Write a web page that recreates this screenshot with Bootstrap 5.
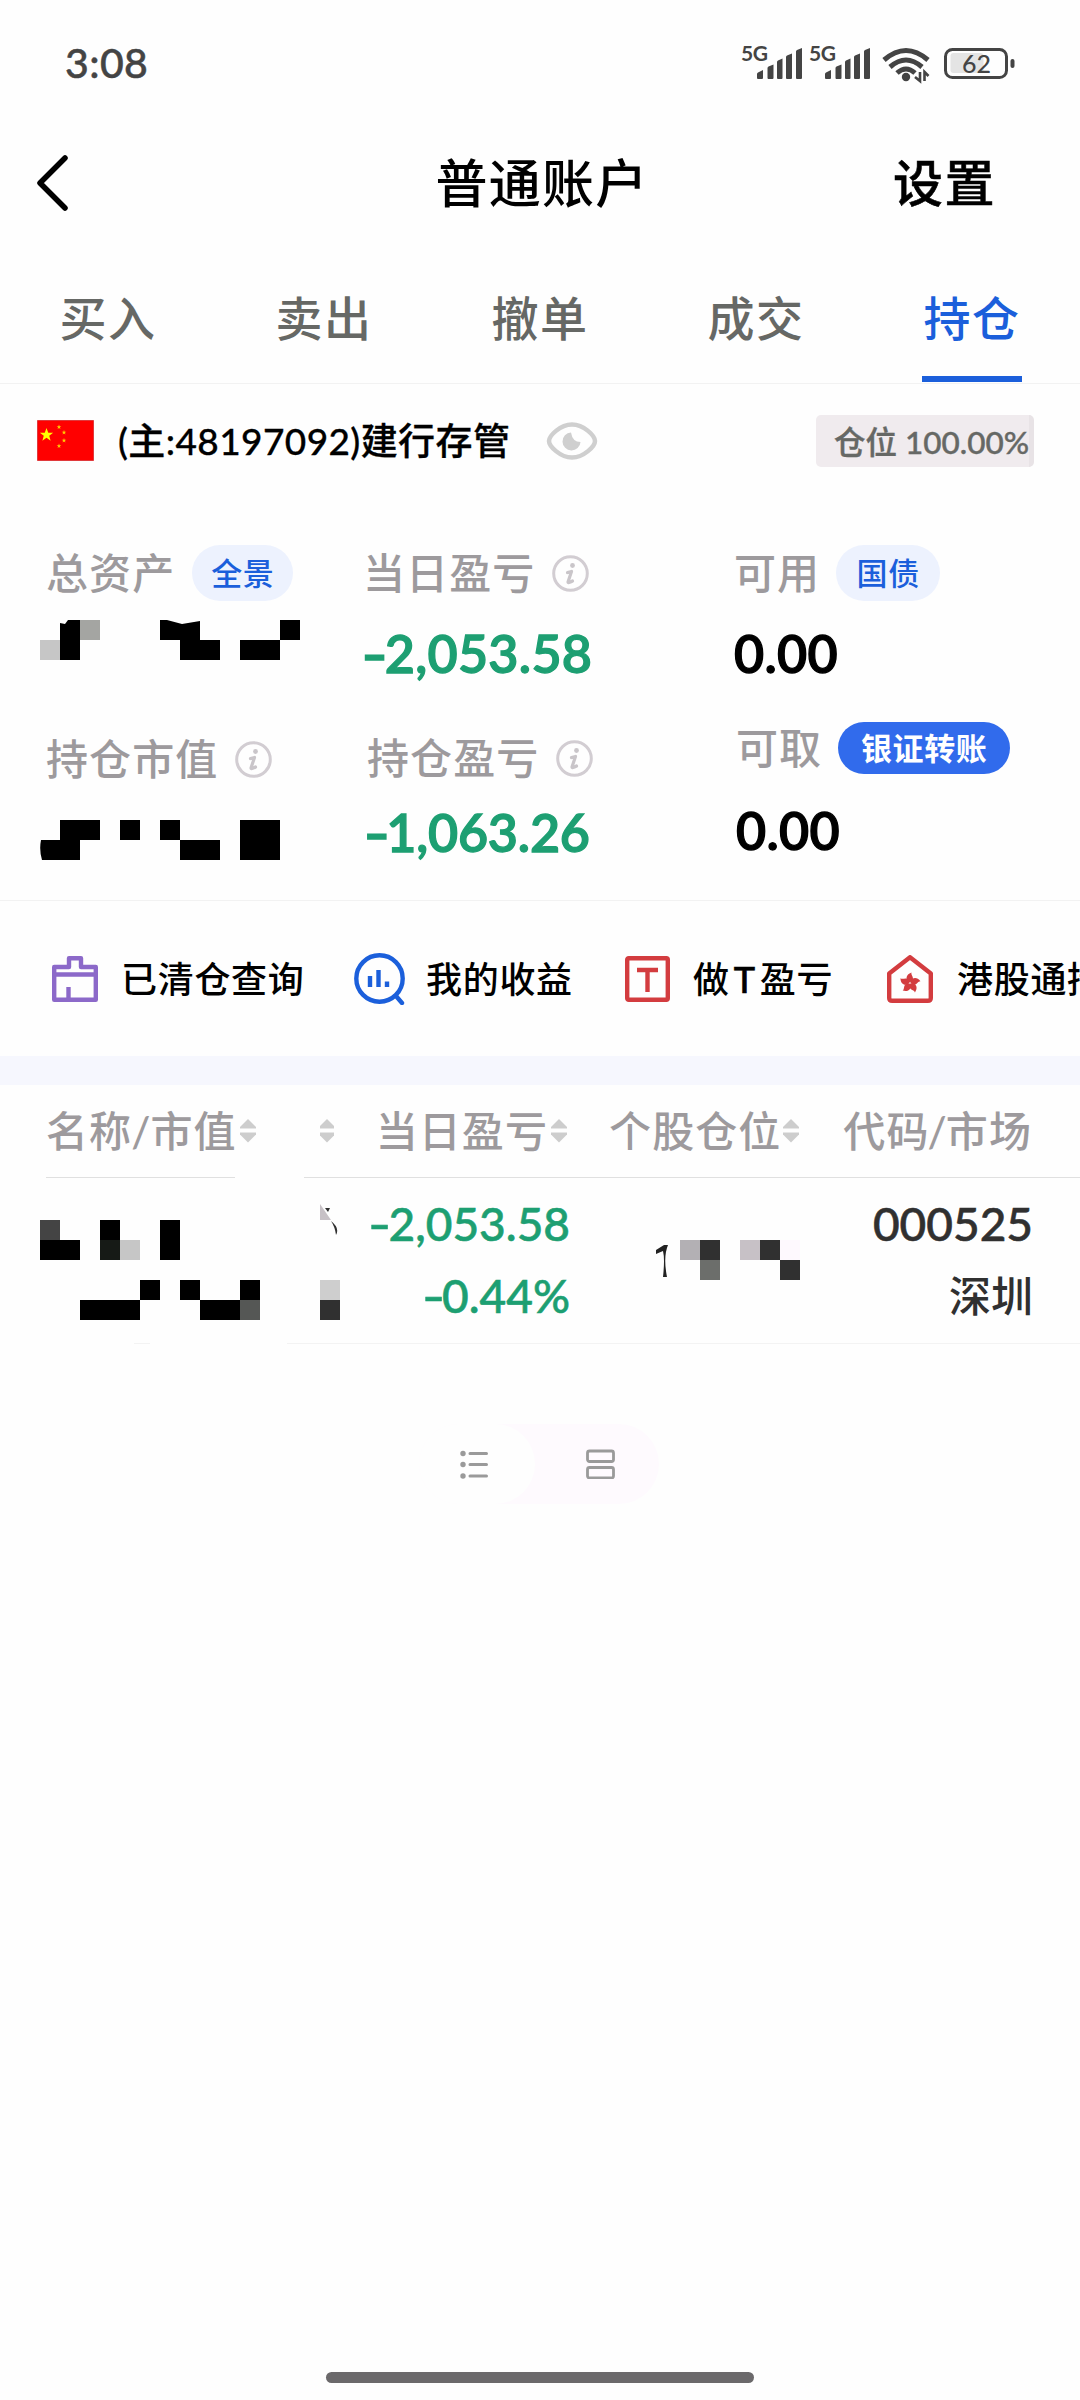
<!DOCTYPE html>
<html lang="zh-CN">
<head>
<meta charset="utf-8">
<meta name="viewport" content="width=device-width, initial-scale=1">
<title>普通账户</title>
<link href="https://cdn.jsdelivr.net/npm/bootstrap@5.3.0/dist/css/bootstrap.min.css" rel="stylesheet">
<style>
body{width:1080px;height:2400px;overflow:hidden;background:#fefefe;color:#000;font-family:Lato,"Noto Sans CJK SC",sans-serif;font-weight:500;line-height:1;font-variant-numeric:tabular-nums}
svg{display:block;flex:none}
.status-bar{height:128px;padding:0 64px 0 65px;color:#444}
.clock{font-size:41px;letter-spacing:.4px;padding-bottom:3px;-webkit-text-stroke:.5px}
.title-bar{height:112px;padding:0 84px 2px 37px}
.title-text{font-size:52px;letter-spacing:1.2px;margin-left:123px}
.set-text{font-size:50px;letter-spacing:1.5px;-webkit-text-stroke:.5px}
.trade-tabs{height:144px;border-bottom:1px solid #f2f2f2;font-size:47px;letter-spacing:1.4px;color:#666865}
.trade-tabs .nav-link{padding:14px 0 0;width:216px;text-align:center;color:inherit;position:relative}
.trade-tabs .nav-link.active{color:#1b5fdb}
.trade-tabs .nav-link.active::after{content:"";position:absolute;left:58px;bottom:1px;width:100px;height:6px;background:#1b5fdb}
.acct{height:115px;padding:0 46px 2px 37px}
.acct-name{font-size:37px;margin-left:24px;letter-spacing:.4px;-webkit-text-stroke:.3px}
.pos-badge{width:218px;height:52px;border-radius:5px;background:#f0ebee;border-right:5px solid #e8e3e6;color:#666865;font-size:31.500px;padding-left:18px;line-height:54px;white-space:nowrap;-webkit-text-stroke:.4px}
.stats{height:402px;padding:46px 0 0 46px;border-bottom:1px solid #f2f2f2}
.stat-a{width:317px}.stat-b{width:371px}.stat-c{width:340px}
.lbl{height:56px;font-size:42px;letter-spacing:1.1px;color:#9d9a9d}
.fig{height:56px;font-size:52px;line-height:56px;font-weight:600;-webkit-text-stroke:1.300px;letter-spacing:.3px}
.up-green{color:#1d9f72}
.neg{display:inline-block;transform:scaleX(1.35)}
.tagpill{height:56px;border-radius:28px;background:#edf2fe;color:#1b5fdb;font-size:31px;letter-spacing:.6px}
.tagpill.solid{height:52px;width:172px;background:#316bec;color:#fff;font-weight:700}
.quick{height:155px;font-size:36px;letter-spacing:.7px;white-space:nowrap;padding-left:52px;overflow:hidden}
.quick span{flex:none}
.quick i{font-style:normal;margin:0 4px;-webkit-text-stroke:.6px}
.band{height:29px;background:#f6f7fe}
.thead-row{height:92px;color:#9d9a9d;font-size:42px;letter-spacing:1.1px;padding-left:46px;white-space:nowrap}
.rule-row{height:1px}
.holding{height:165px;padding-left:40px}
.cell{font-size:46px;line-height:72px;text-align:right;-webkit-text-stroke:.6px}
.toggle-pill{width:240px;height:80px;border-radius:40px;background:#fefafe;margin:80px auto 0 419px}
.toggle-pill .on{width:116px;height:80px;border-radius:40px;background:#fefefe}
.home{width:428px;height:11px;border-radius:6px;background:#6b696b;margin:0 auto 17px}
</style>
</head>
<body class="d-flex flex-column">
<svg width="0" height="0" class="position-absolute">
  <defs>
    <g id="info"><circle cx="18.500" cy="18.500" r="16.800" fill="none" stroke="#d2cdd2" stroke-width="3"/><circle cx="20.500" cy="10.500" r="2.400" fill="#c9c5c9"/><path d="M15.500 17.500l4-1-3.500 10.500q0 1.500 4.500-1" fill="none" stroke="#c9c5c9" stroke-width="3.200" stroke-linecap="round" stroke-linejoin="round"/></g>
    <g id="sort" fill="#cdcdcd"><path d="M8 0l8 8v1.500H0V8z"/><path d="M8 23.500l8-8V13.500H0V15.500z"/></g>
    <g id="sig" fill="#444"><path d="M0 30v-4q0-1 1-1.500l5-2.500v8q0 1-1 1H1q-1 0-1-1zM10.500 30V20q0-1 1-1.500l5-2V30q0 1-1 1h-4q-1 0-1-1zM20 30V14q0-1 1-1.500l4.500-2V30q0 1-1 1H21q-1 0-1-1zM29 30V9q0-1 1-1.500l5-2V30q0 1-1 1h-4q-1 0-1-1zM39 30V3.500q0-1 1-1.500l5-2V30q0 1-1 1h-4q-1 0-1-1z"/></g>
    <path id="star" d="M0-10L2.500-3.200 9.500-3.100 3.900 1.200 5.900 8.100 0 4-5.900 8.100-3.900 1.200-9.500-3.100-2.500-3.200z"/>
    <path id="petal" d="M0-.5C-5-3-4.500-8.500 1.500-10.500 .5-8 5-5 2-2 1.200-1.200 .5-1 0-.5z"/>
  </defs>
</svg>

<div class="status-bar d-flex align-items-center justify-content-between">
  <span class="clock">3:08</span>
  <svg width="286" height="60" viewBox="730 34 286 60">
    <g font-family="Lato" font-weight="700" font-size="21" fill="#444"><text x="741" y="61" textLength="27">5G</text><text x="809" y="61" textLength="27">5G</text></g>
    <use href="#sig" x="757" y="48"/><use href="#sig" x="825" y="48"/>
    <g fill="none" stroke="#444" stroke-width="5"><path d="M884 60q22-19 44 0"/><path d="M890 67q16-14 32 0"/><path d="M897 73q9-8 18 0"/></g>
    <circle cx="906" cy="77" r="4.200" fill="#444"/>
    <path d="M920 72v9l-5-4M924.500 81v-9l4 4" fill="none" stroke="#444" stroke-width="2.600"/>
    <rect x="945.500" y="49.500" width="61" height="28" rx="7" fill="none" stroke="#444" stroke-width="3"/>
    <rect x="950.500" y="53" width="33" height="20" rx="3" fill="#e4e4e4"/>
    <rect x="1010.500" y="59" width="4" height="9" rx="2" fill="#444"/>
    <text x="962" y="73" font-family="Lato" font-size="25" font-weight="500" fill="#444" textLength="29">62</text>
  </svg>
</div>

<div class="title-bar d-flex align-items-center justify-content-between">
  <svg width="31" height="56" viewBox="0 0 31 56"><path d="M28 3L3 28l25 25" fill="none" stroke="#000" stroke-width="5.500" stroke-linecap="round" stroke-linejoin="round"/></svg>
  <span class="title-text">普通账户</span>
  <span class="set-text">设置</span>
</div>

<nav class="trade-tabs nav flex-nowrap align-items-stretch">
  <a class="nav-link d-flex align-items-center justify-content-center">买入</a>
  <a class="nav-link d-flex align-items-center justify-content-center">卖出</a>
  <a class="nav-link d-flex align-items-center justify-content-center">撤单</a>
  <a class="nav-link d-flex align-items-center justify-content-center">成交</a>
  <a class="nav-link d-flex align-items-center justify-content-center active">持仓</a>
</nav>

<div class="acct d-flex align-items-center">
  <svg width="57" height="41" viewBox="0 0 57 41"><path fill="#f00" stroke="#e0393c" d="M.5.5h56v40H.5z"/><g fill="#ff0"><use href="#star" transform="translate(9.500 15) scale(.7)"/><g fill="#fc0"><use href="#star" transform="translate(22 7) scale(.24)"/><use href="#star" transform="translate(27 12.500) scale(.24)"/><use href="#star" transform="translate(27 20.500) scale(.24)"/><use href="#star" transform="translate(22 26) scale(.24)"/></g></g></svg>
  <span class="acct-name">(主:48197092)建行存管</span>
  <svg width="52" height="40" viewBox="0 0 52 40" style="margin-left:36px"><path d="M3 20C3 15 14 3.500 26 3.500S49 15 49 20 38 36.500 26 36.500 3 25 3 20z" fill="none" stroke="#cfcfcf" stroke-width="4.500"/><path d="M25 11.500a9 9 0 1 0 9.500 9.500q-8 0-9.500-9.500z" fill="#cfcfcf"/></svg>
  <div class="pos-badge ms-auto">仓位 100.00%</div>
</div>

<section class="stats d-flex">
  <div class="stat-a">
    <div class="lbl d-flex align-items-center">总资产<span class="tagpill d-flex align-items-center justify-content-center" style="width:101px;margin-left:17px">全景</span></div>
    <svg width="260" height="40" viewBox="40 620 260 40" style="margin:19px 0 0 -6px"><path d="M60 623l5 1 3-4h12v40H60zM160 620h7l15 4 18-3v19h20v20h-40v-20h-20zM280 620h20v20h-20zM240 640h40v20h-40z"/><path fill="#a4a5a2" d="M80 620h20v20H80z"/><path fill="#c6c6c6" d="M40 640h20v20H40z"/></svg>
    <div class="lbl d-flex align-items-center" style="margin-top:71px">持仓市值<svg width="37" height="37" style="margin-left:17px"><use href="#info"/></svg></div>
    <svg width="240" height="40" viewBox="40 820 240 40" style="margin:33px 0 0 -6px"><path d="M60 820h40v20H80v20H42q-3-10-1-20h19zM120 820h20v20h-20zM160 820h20v20h40v20h-40v-20h-20zM240 820h40v40h-40z"/></svg>
  </div>
  <div class="stat-b">
    <div class="lbl d-flex align-items-center">当日盈亏<svg width="37" height="37" style="margin-left:17px"><use href="#info"/></svg></div>
    <div class="fig up-green" style="margin:24px 0 0 2px"><span class="neg">-</span>2,053.58</div>
    <div class="lbl d-flex align-items-center" style="margin:49px 0 0 4px">持仓盈亏<svg width="37" height="37" style="margin-left:17px"><use href="#info"/></svg></div>
    <div class="fig up-green" style="margin:18px 0 0 4px;letter-spacing:-.2px"><span class="neg">-</span>1,063.26</div>
  </div>
  <div class="stat-c">
    <div class="lbl d-flex align-items-center">可用<span class="tagpill d-flex align-items-center justify-content-center" style="width:104px;margin-left:16px">国债</span></div>
    <div class="fig" style="margin-top:24px">0.00</div>
    <div class="lbl d-flex align-items-center" style="margin:39px 0 0 2px">可取<span class="tagpill solid d-flex align-items-center justify-content-center" style="margin-left:16px">银证转账</span></div>
    <div class="fig" style="margin:26px 0 0 2px">0.00</div>
  </div>
</section>

<div class="quick d-flex align-items-center">
  <svg width="46" height="46" viewBox="0 0 46 46" fill="none" stroke="#8c69c9" stroke-width="4.400" stroke-linejoin="round"><path d="M2.200 11H17V2.200h12V11h14.800v32.800H2.200zM2 18.500h42M16.500 31v13"/></svg>
  <span style="margin:0 0 0 23px;width:233px">已清仓查询</span>
  <svg width="52" height="52" viewBox="0 0 52 52" fill="none" stroke="#1b5fdb" stroke-width="4.400"><circle cx="25.500" cy="25.500" r="23.200"/><path d="M42 43l6 7" stroke-linecap="round"/><path d="M16 23v11M24.500 17v17M33 28.500V34"/></svg>
  <span style="margin:0 0 0 20px;width:199px">我的收益</span>
  <svg width="45" height="46" viewBox="0 0 45 46" fill="none" stroke="#d33c3f" stroke-width="4.400"><rect x="2.200" y="2.200" width="40.600" height="41.600" rx="1.500"/><path d="M12 14h21M22.500 14v22"/></svg>
  <span style="margin:0 0 0 23px;width:194px">做<i>T</i>盈亏</span>
  <svg width="46" height="48" viewBox="0 0 46 48" fill="none" stroke="#d33c3f" stroke-width="4.400" stroke-linejoin="round"><path d="M2.200 18.500L23 2.200l20.800 16.300V43q0 2.800-3 2.800H5.200q-3 0-3-2.800z"/><g fill="#d33c3f" stroke="none" transform="translate(23 28)"><use href="#petal"/><use href="#petal" transform="rotate(72)"/><use href="#petal" transform="rotate(144)"/><use href="#petal" transform="rotate(216)"/><use href="#petal" transform="rotate(288)"/></g></svg>
  <span style="margin-left:24px">港股通持仓</span>
</div>
<div class="band"></div>

<div class="thead-row d-flex align-items-center">
  <span>名称<span style="margin:0 -1px">/</span>市值</span><svg width="16" height="24" style="margin-left:3px"><use href="#sort"/></svg>
  <svg width="14" height="24" viewBox="1 0 14 24" style="margin-left:64px"><use href="#sort"/></svg>
  <span style="margin-left:42px">当日盈亏</span><svg width="16" height="24" style="margin-left:3px"><use href="#sort"/></svg>
  <span style="margin-left:42px">个股仓位</span><svg width="16" height="24" style="margin-left:2px"><use href="#sort"/></svg>
  <span class="ms-auto" style="margin-right:48px">代码<span style="margin:0 -2px">/</span>市场</span>
</div>
<div class="rule-row d-flex justify-content-between"><div style="width:189px;margin-left:46px;background:#e0e0e0"></div><div style="width:776px;background:#e0e0e0"></div></div>

<div class="holding d-flex">
  <svg width="300" height="120" viewBox="40 1200 300 120" style="margin-top:22px">
    <path d="M40 1240h40v20H40zM100 1220h20v40h-20zM160 1220h20v40h-20zM80 1300h60v20H80zM140 1280h20v20h-20zM180 1280h20v20h-20zM200 1300h40v20h-40zM240 1280h20v20h-20z"/>
    <path fill="#444" d="M40 1220h20v20H40z"/><path fill="#161a16" d="M100 1240h20v20h-20z"/><path fill="#c6c6c6" d="M120 1240h20v20h-20z"/><path fill="#555755" d="M240 1300h20v20h-20z"/>
    <path fill="#cecece" d="M320 1280h20v20h-20z"/><path fill="#303030" d="M320 1300h20v20h-20zM325 1208h5l-2 4zM331 1221q9 7 5 14-1-8-5-14z"/><path fill="#c7c1c6" d="M320 1204l11 16h-11z"/>
  </svg>
  <div class="cell up-green" style="width:230px;padding-top:10px"><div><span class="neg">-</span>2,053.58</div><div><span class="neg">-</span>0.44%</div></div>
  <svg width="144" height="40" viewBox="656 1240 144 40" style="margin:62px 0 0 86px">
    <path fill="#222" d="M656 1250l8-5h4q-5 12-1 32h-4q2-18 0-26l-7 3z"/><path fill="#b3b0b4" d="M680 1240h20v20h-20z"/><path fill="#303030" d="M700 1240h20v20h-20zM760 1240h20v20h-20zM780 1260h20v20h-20z"/><path fill="#6c6e6b" d="M700 1260h20v20h-20z"/><path fill="#c7c1c6" d="M740 1240h20v20h-20z"/><path fill="#fef9fe" d="M780 1240h20v20h-20z"/>
  </svg>
  <div class="cell ms-auto" style="color:#303030;padding:10px 47px 0 0"><div>000525</div><div style="font-size:42px;-webkit-text-stroke:0">深圳</div></div>
</div>
<div class="rule-row d-flex"><div style="width:16px;margin-left:134px;background:#f3f3f3"></div><div class="flex-grow-1" style="margin-left:137px;background:#f3f3f3"></div></div>

<div class="toggle-pill d-flex">
  <div class="on d-flex align-items-center" style="padding-left:41px"><svg width="28" height="29" viewBox="0 0 28 29" stroke="#9a9a9a" stroke-width="3" stroke-linecap="round" fill="#9a9a9a"><path d="M10 3.500h16.500M10 14.500h16.500M10 26h16.500"/><g stroke="none"><circle cx="3" cy="3.500" r="2.700"/><circle cx="3" cy="14.500" r="2.700"/><circle cx="3" cy="26" r="2.700"/></g></svg></div>
  <svg width="29" height="30" viewBox="0 0 29 30" class="align-self-center" style="margin-left:51px" fill="none" stroke="#9a9a9a" stroke-width="2.800"><rect x="1.500" y="2" width="26" height="10.500" rx="2"/><rect x="1.500" y="18.500" width="26" height="10.500" rx="2"/></svg>
</div>
<div class="home mt-auto"></div>
<script src="https://cdn.jsdelivr.net/npm/bootstrap@5.3.0/dist/js/bootstrap.bundle.min.js"></script>
</body>
</html>
